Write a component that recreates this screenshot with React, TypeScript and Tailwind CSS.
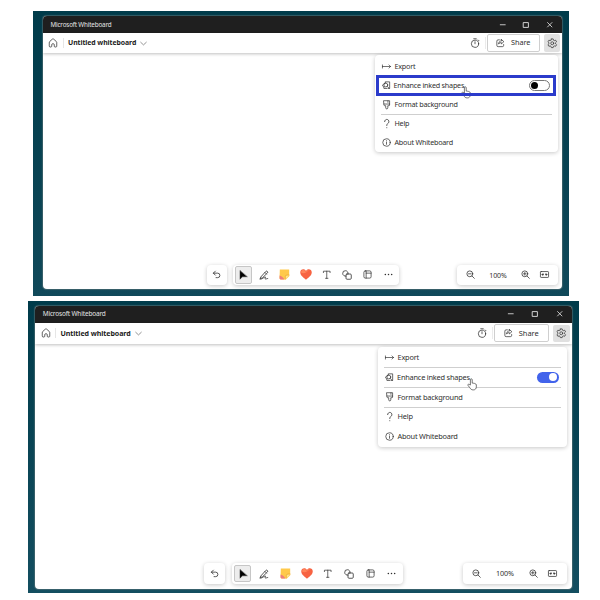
import React from "react";

type IconProps = { className?: string; children: React.ReactNode; sw?: number };

function Icon({ className = "h-[10px] w-[10px]", children, sw = 1.5 }: IconProps) {
  return (
    <svg viewBox="0 0 20 20" fill="none" stroke="currentColor" strokeWidth={sw} strokeLinecap="round" strokeLinejoin="round" className={"shrink-0 overflow-visible " + className}>
      {children}
    </svg>
  );
}

const Home = () => (
  <Icon className="h-[10px] w-[10px]">
    <path d="M2.500 9.200c0-.9.4-1.700 1-2.300L8.800 2.200a1.800 1.800 0 0 1 2.400 0l5.300 4.700c.6.6 1 1.400 1 2.300V16.500c0 .8-.7 1.500-1.500 1.500h-2c-.8 0-1.500-.7-1.500-1.500V13c0-1-.8-1.500-2.500-1.500S7.500 12 7.500 13v3.500c0 .8-.7 1.500-1.500 1.500H4c-.8 0-1.500-.7-1.500-1.500z" />
  </Icon>
);
const Chevron = () => (
  <Icon className="h-[7px] w-[7px] text-[#666]" sw={2}><path d="M2 6.500l8 7.500 8-7.500" /></Icon>
);
const Timer = () => (
  <Icon><circle cx="10" cy="11.500" r="7.300" /><path d="M10 7.500v4M7.500 1.500h5M16.500 4l1.500 1.500" /></Icon>
);
const ShareIcon = () => (
  <Icon className="h-[8.500px] w-[8.500px]" sw={1.700}>
    <path d="M8 2H5a3 3 0 0 0-3 3v10a3 3 0 0 0 3 3h10a3 3 0 0 0 3-3v-2" />
    <path d="M12.500 1l6 5.300-6 5.300V8.500c-3 0-5 .8-6.500 3.500.3-4.500 2.500-7.400 6.500-7.700z" />
  </Icon>
);
const Gear = () => (
  <Icon className="h-[10.500px] w-[10.500px]" sw={1.400}>
    <path d="M8.300 1.700h3.400l.7 2.500 1.500.8 2.500-.8 1.800 3-1.900 1.800v2l1.900 1.800-1.800 3-2.500-.7-1.500.8-.7 2.400H8.300l-.7-2.400-1.500-.8-2.500.7-1.800-3L3.700 11V9L1.800 7.200l1.800-3 2.500.8 1.500-.8z" />
    <circle cx="10" cy="10" r="2.800" />
  </Icon>
);
const ExportIcon = () => (
  <Icon className="h-[9px] w-[9px]"><path d="M1 6.500v7M1 10h18M15.500 6.500L19 10l-3.500 3.500" /></Icon>
);
const Enhance = () => (
  <Icon className="h-[8.500px] w-[8.500px]" sw={1.700}>
    <path d="M7.500 4.500V2H18v15.500h-4" />
    <path d="M7.500 5L3 7.500 1.200 11.500 4 14" />
    <circle cx="9" cy="9.500" r="4.500" />
    <path d="M12.200 12.700L17 17.500M4.500 14v3.500H11" />
  </Icon>
);
const Brush = () => (
  <Icon className="h-[9.500px] w-[9.500px]"><path d="M4 1.500h12v9a1.500 1.500 0 0 1-1.500 1.500H12.200v4.500a2.200 2.200 0 0 1-4.400 0V12H5.500A1.500 1.500 0 0 1 4 10.500zM4 8.500h12M12.500 2v3" /></Icon>
);
const Help = () => (
  <Icon className="h-[9.500px] w-[9.500px]" sw={1.700}><path d="M5.500 5.500a4.500 4.500 0 1 1 7.500 3.200c-1.500 1.300-3 2.500-3 5M10 18.300v.2" /></Icon>
);
const Info = () => (
  <Icon className="h-[9px] w-[9px]" sw={1.600}><circle cx="10" cy="10" r="8.300" /><path d="M10 9v5M10 6v.2" /></Icon>
);
const Undo = () => (
  <Icon className="h-[9px] w-[9px]" sw={1.800}><path d="M7.500 2.500L3 7l4.500 4.500M3 7h9.500a5 5 0 0 1 0 10H9" /></Icon>
);
const Pointer = () => (
  <Icon className="h-[10px] w-[10px]" sw={1}><path fill="#000" d="M4 1.500v17l4.700-4.800 9.300-.2z" /></Icon>
);
const Pen = () => (
  <Icon className="h-[10px] w-[10px]" sw={1.600}>
    <path d="M4 13.500L13.500 3a2.200 2.200 0 0 1 3.300 3L7 15.500 3 17zM12 5l3 3M2 18.500c4 .5 8-4.500 10.500-4.500 2 0-1.500 3.800.3 4.200 1.500.3 2.200-1.200 4.700-1.200" />
  </Icon>
);
const Note = () => (
  <svg viewBox="0 0 20 20" className="h-[11px] w-[11px] shrink-0">
    <path d="M1.500 1h17v12l-6 6H3a2 2 0 0 1-2-2z" fill="#ffc94a" />
    <path d="M1 12c3 1 6.500 3 9 7H3a2 2 0 0 1-2-2z" fill="#ee7d7b" />
    <path d="M19 11l-7.500 8v-5a3 3 0 0 1 3-3z" fill="#ffe48b" />
    <path d="M19 11h-4.500a3 3 0 0 0-3 3v5" fill="none" stroke="#e9a72d" strokeWidth="1.300" />
  </svg>
);
const Heart = () => (
  <svg viewBox="0 0 24 22" className="h-[11px] w-[12px] shrink-0">
    <path d="M12 21.500C8 18 .5 13 .5 7 .5 3.200 3.300.7 6.500.7c2.300 0 4.300 1.200 5.500 3.200C13.200 1.900 15.200.7 17.500.7c3.200 0 6 2.500 6 6.300 0 6-7.500 11-11.500 14.500z" fill="#f76342" />
    <path d="M2 7c0-3 2-5 4.500-5 2.300 0 4.200 1.600 5.500 4 1.300-2.400 3.200-4 5.500-4C14 6 8 11 2 7z" fill="#ff855b" />
  </svg>
);
const TextTool = () => (
  <Icon className="h-[9.500px] w-[9.500px]" sw={1.500}><path d="M3 5.500V2.500h14v3M10 2.500v15M7.500 17.500h5" /></Icon>
);
const Shapes = () => (
  <Icon className="h-[10px] w-[10px]" sw={1.600}><path d="M8 12.300A5.500 5.500 0 1 1 12.300 8" /><rect x="8" y="8" width="10.500" height="10.500" rx="2" /></Icon>
);
const Template = () => (
  <Icon className="h-[9px] w-[9px]" sw={1.600}><rect x="2" y="2" width="16" height="16" rx="3" /><path d="M7 2v16M7 7h11" /></Icon>
);
const Dots = () => (
  <Icon className="h-[9px] w-[9px]" sw={0}><g fill="currentColor"><circle cx="3" cy="10" r="1.700" /><circle cx="10" cy="10" r="1.700" /><circle cx="17" cy="10" r="1.700" /></g></Icon>
);
const Zoom = ({ plus }: { plus?: boolean }) => (
  <Icon className="h-[9px] w-[9px]" sw={1.700}><circle cx="8.500" cy="8.500" r="6.500" /><path d={plus ? "M13.500 13.500L18.500 18.500M5.500 8.500h6M8.500 5.500v6" : "M13.500 13.500L18.500 18.500M5.500 8.500h6"} /></Icon>
);
const Fit = () => (
  <Icon className="h-[9px] w-[9px]" sw={1.700}><rect x="1" y="3.500" width="18" height="13" rx="1.500" /><path d="M4.500 10h3M12.500 10h3M6 8.500L4.500 10 6 11.500zM14 8.500l1.500 1.500-1.500 1.500z" /></Icon>
);

function Hand({ className }: { className: string }) {
  return (
    <svg viewBox="0 0 18 24" className={"absolute " + className}>
      <path d="M6 13V3.200a1.700 1.700 0 0 1 3.400 0v6.300c.8-.7 2.500-.5 2.900.5.9-.5 2.300-.2 2.500.9 1.200-.3 2.200.4 2.200 1.600v4c0 3-2 5.500-5.500 5.500S6.500 20.500 5 18l-3.500-4.500c-.8-1.500 1-2.600 2.300-1.600z" fill="#fff" stroke="#555" strokeWidth="1.500" strokeLinejoin="round" />
    </svg>
  );
}

type Variant = {
  desktop: string; win: string; bar: string; appName: string;
  control: string;
  header: string; home: string; title: string; docName: string;
  timer: string; share: string; shareText: string; gear: string;
  menu: string; rows: [string, string, string, string, string]; text: string;
  lines: [boolean, boolean, boolean]; enabled: boolean; hand: string;
  undo: string; tools: string; zoom: string; pct: string; zoomText: string;
};

const first: Variant = {
  desktop: "ml-[33px] h-[285px] w-[536px] pl-[10px] pt-[5px] bg-linear-to-b from-[#003b4a] to-[#10495a]",
  win: "h-[273px] w-[519px]",
  bar: "h-[17px] pl-[7.500px]",
  appName: "text-[6.300px] tracking-[-0.170px] pt-[1px]",
  control: "w-[23.700px]",
  header: "h-[20px] pl-[5px] pr-[2px]",
  home: "w-[15.500px]",
  title: "pl-[4.500px]",
  docName: "text-[6.900px] tracking-[-0.080px] w-[72px] pt-[0.500px]",
  timer: "mr-[5px]",
  share: "h-[18px] w-[52.500px] mr-[4px] gap-[6.500px]",
  shareText: "text-[7.300px] tracking-[-0.050px]",
  gear: "h-[18px] w-[16.500px]",
  menu: "left-[331.500px] top-[39px] h-[97px] w-[183.500px] pt-[2px]",
  rows: ["h-[19px]", "h-[19px]", "h-[19px]", "h-[19.500px]", "h-[18.500px]"],
  text: "text-[7.200px] tracking-[-0.220px]",
  lines: [false, false, true],
  enabled: false,
  hand: "left-[417.500px] top-[69.500px] h-[13px] w-[10px]",
  undo: "left-[163.500px] top-[248.500px] h-[20.500px] w-[20.500px]",
  tools: "left-[189.500px] top-[248.500px] h-[20.500px] w-[166.500px] pl-[0.500px]",
  zoom: "left-[413.500px] top-[248.500px] h-[20.500px] w-[101.500px] pl-[4px]",
  pct: "w-[35px]",
  zoomText: "text-[7px] tracking-[-0.100px] pt-[0.500px]",
};

const second: Variant = {
  desktop: "mt-[5px] ml-[28px] h-[292px] w-[551px] pl-[7px] pt-[4.500px] bg-linear-to-b from-[#003b4a] to-[#134e60]",
  win: "h-[283px] w-[536.500px]",
  bar: "h-[17px] pl-[7.700px]",
  appName: "text-[6.500px] tracking-[-0.170px] pt-[0.500px]",
  control: "w-[24.500px]",
  header: "h-[21.500px] pl-[5.500px] pr-[2px]",
  home: "w-[15.500px]",
  title: "pl-[4.500px]",
  docName: "text-[7.100px] tracking-[-0.080px] w-[74.500px] pt-[1px]",
  timer: "mr-[5px]",
  share: "h-[18px] w-[54.500px] mr-[4px] gap-[6.500px]",
  shareText: "text-[7.500px] tracking-[-0.050px]",
  gear: "h-[17.500px] w-[17px]",
  menu: "left-[342.500px] top-[41px] h-[100px] w-[189.500px] pt-[1px]",
  rows: ["h-[19.500px]", "h-[20px]", "h-[20px]", "h-[19.500px]", "h-[19.500px]"],
  text: "text-[7.400px] tracking-[-0.220px]",
  lines: [true, true, true],
  enabled: true,
  hand: "left-[431.500px] top-[72.500px] h-[13px] w-[10px]",
  undo: "left-[168.500px] top-[257.500px] h-[21px] w-[21.500px]",
  tools: "left-[196.500px] top-[257.500px] h-[21px] w-[171px] pl-[0.500px]",
  zoom: "left-[427.500px] top-[257.500px] h-[21px] w-[104.500px] pl-[4px]",
  pct: "w-[37px]",
  zoomText: "text-[7.200px] tracking-[-0.100px] pt-[0.500px]",
};

const panel = "absolute rounded-[4px] bg-white shadow-[0_1px_4px_rgba(0,0,0,0.22)]";

function Whiteboard({ v }: { v: Variant }) {
  const items = [
    { icon: <ExportIcon />, label: "Export" },
    { icon: <Enhance />, label: "Enhance inked shapes" },
    { icon: <Brush />, label: "Format background" },
    { icon: <Help />, label: "Help" },
    { icon: <Info />, label: "About Whiteboard" },
  ];
  return (
    <section className={v.desktop}>
      <div className={"relative overflow-hidden rounded-[4px] bg-white shadow-[0_0_1px_0.5px_rgba(90,115,120,0.6)] " + v.win}>
        <div className={"flex items-center bg-[#1f1f1f] text-[#e4e4e4] " + v.bar}>
          <span className={"whitespace-nowrap leading-none " + v.appName}>Microsoft Whiteboard</span>
          <div className="ml-auto flex items-center">
            <span className={"flex justify-center " + v.control}><Icon className="h-[5.500px] w-[5.500px]" sw={3}><path d="M1 10h18" /></Icon></span>
            <span className={"flex justify-center " + v.control}><Icon className="h-[6px] w-[6px]" sw={3}><rect x="2" y="2" width="16" height="16" /></Icon></span>
            <span className={"flex justify-center " + v.control}><Icon className="h-[5.500px] w-[5.500px]" sw={3}><path d="M2 2l16 16M18 2L2 18" /></Icon></span>
          </div>
        </div>
        <header className={"flex items-center bg-white shadow-[0_1px_3px_rgba(0,0,0,0.25)] " + v.header}>
          <div className={"flex items-center border-r border-[#e6e6e6] " + v.home}><Home /></div>
          <div className={"flex items-center " + v.title}>
            <span className={"whitespace-nowrap font-bold leading-none text-[#1c1c1c] " + v.docName}>Untitled whiteboard</span>
            <Chevron />
          </div>
          <div className={"ml-auto flex items-center " + v.timer}><Timer /></div>
          <div className="mr-[1.500px] h-[12px] w-px bg-[#ebebeb]" />
          <div className={"flex items-center justify-center rounded-[2px] border border-[#cfcfcf] " + v.share}>
            <ShareIcon />
            <span className={"leading-none " + v.shareText}>Share</span>
          </div>
          <div className={"flex items-center justify-center rounded-[2px] bg-[#e0e0e0] " + v.gear}><Gear /></div>
        </header>

        <div className={panel + " " + v.menu}>
          {items.map((it, i) => (
            <div key={it.label} className={"relative px-[6px] " + v.rows[i]}>
              <div className={i === 1 && !v.enabled ? "absolute -top-[1.500px] left-[1.500px] z-10 flex h-[21.500px] w-[179.500px] items-center border-[3px] border-[#2b3bcb] pl-[2.500px] pr-[3px]" : i === 1 ? "flex h-full items-center pl-[1.500px] pr-[2.500px]" : "flex h-full items-center pl-[1px]"}>
                <span className={i === 1 ? "flex w-[12px] shrink-0" : "flex w-[13px] shrink-0"}>{it.icon}</span>
                <span className={"whitespace-nowrap pt-[0.500px] leading-none " + v.text}>{it.label}</span>
                {i === 1 && (v.enabled ? (
                  <span className="ml-auto flex h-[11px] w-[21.500px] items-center justify-end rounded-full bg-[#4263eb] pr-[1.500px]"><span className="h-[8px] w-[8px] rounded-full bg-white" /></span>
                ) : (
                  <span className="ml-auto flex h-[10.500px] w-[20.500px] items-center rounded-full border border-[#777] pl-[0.500px]"><span className="h-[7px] w-[7px] rounded-full bg-black" /></span>
                ))}
              </div>
              {i < 3 && v.lines[i] && <div className="absolute inset-x-[6px] -bottom-[0.500px] h-px bg-[#cfcfcf]" />}
            </div>
          ))}
        </div>
        <Hand className={v.hand} />

        <div className={panel + " flex items-center justify-center " + v.undo}><Undo /></div>
        <div className={panel + " grid grid-cols-8 items-center justify-items-center " + v.tools}>
          <span className="flex h-[17.500px] w-[17px] items-center justify-center rounded-[2px] border border-[#c6c6c6] bg-[#ededed]"><Pointer /></span>
          <Pen /><Note /><Heart /><TextTool /><Shapes /><Template /><Dots />
        </div>
        <div className={panel + " flex items-center " + v.zoom}>
          <span className="flex w-[20px] justify-center"><Zoom /></span>
          <span className={"text-center leading-none " + v.pct + " " + v.zoomText}>100%</span>
          <span className="flex w-[19px] justify-center"><Zoom plus /></span>
          <span className="flex w-[19px] justify-center"><Fit /></span>
        </div>
      </div>
    </section>
  );
}

export default function App() {
  return (
    <main className="h-[600px] w-[600px] overflow-hidden bg-white pt-[11px] font-['Noto_Sans','Open_Sans',sans-serif] text-[#303030]">
      <Whiteboard v={first} />
      <Whiteboard v={second} />
    </main>
  );
}
